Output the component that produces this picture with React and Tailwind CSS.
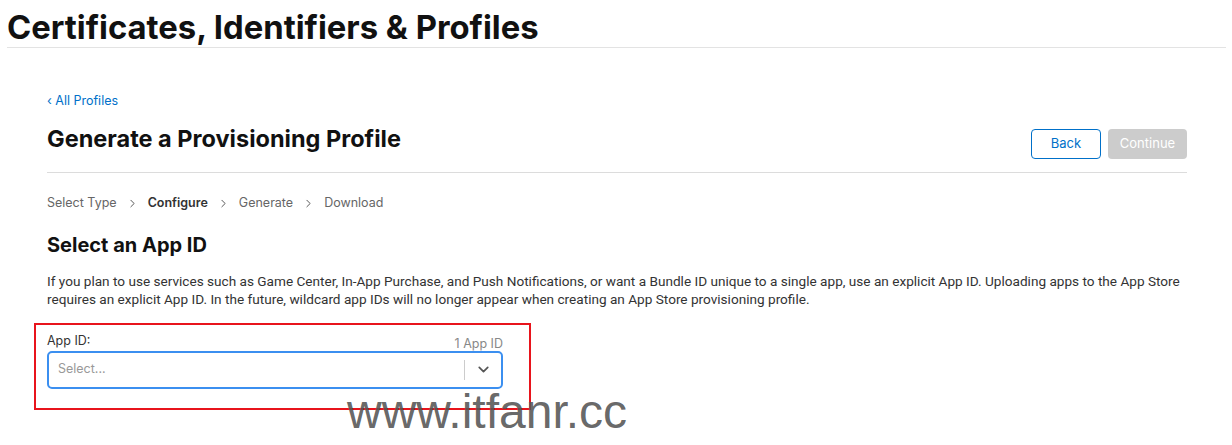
import { ChevronDown, ChevronRight } from "lucide-react";

const steps = [
    { label: "Select Type", active: false },
    { label: "Configure", active: true },
    { label: "Generate", active: false },
    { label: "Download", active: false },
];

const App = () => {
    return (
        <div className="relative w-[1232px] h-[445px] bg-white overflow-hidden text-[#333] font-['Inter',sans-serif]">
            <header className="pl-[7px] pr-[6px]">
                <h1 className="text-[32.8px] font-bold leading-none text-[#111] pt-[11px] pb-[3px]">
                    Certificates, Identifiers &amp; Profiles
                </h1>
                <hr className="border-t border-[#e3e3e3]" />
            </header>

            <main className="px-[47px] pr-[45px] pt-[45px]">
                <a className="text-[12.5px] text-[#0070c9] leading-4 block">‹ All Profiles</a>

                <div className="flex items-start justify-between mt-[16px] pb-[13px] border-b border-[#dcdcdc]">
                    <h2 className="text-[23.5px] leading-[28px] font-bold text-[#111]">Generate a Provisioning Profile</h2>
                    <div className="flex gap-[7px] mt-[4px]">
                        <button className="w-[70px] h-[30px] rounded-[4px] border border-[#0070c9] text-[13px] text-[#0070c9]">
                            Back
                        </button>
                        <button className="w-[79px] h-[30px] rounded-[4px] bg-[#cccccc] text-[13px] text-white">
                            Continue
                        </button>
                    </div>
                </div>

                <nav className="flex items-center mt-[21px] text-[12.5px] text-[#666]">
                    {steps.map((s, i) => (
                        <div key={s.label} className="flex items-center">
                            {i > 0 && <ChevronRight size={13} strokeWidth={1.8} className="mx-[9px] text-[#555]" />}
                            <span className={s.active ? "font-semibold text-[#333]" : ""}>{s.label}</span>
                        </div>
                    ))}
                </nav>

                <h3 className="mt-[20px] text-[20px] font-bold text-[#111] leading-6">Select an App ID</h3>

                <p className="mt-[15px] text-[13.6px] leading-[18px] text-[#333] font-['Roboto',sans-serif]">
                    If you plan to use services such as Game Center, In-App Purchase, and Push Notifications, or want a Bundle ID unique to a single app, use an explicit App ID. Uploading apps to the App Store requires an explicit App ID. In the future, wildcard app IDs will no longer appear when creating an App Store provisioning profile.
                </p>

                <div className="mt-[15px] -ml-[13px] w-[497px] border-2 border-[#e8141c] pt-[8px] pb-[19px] pl-[11px] pr-[26px]">
                    <div className="flex items-end justify-between text-[12.5px] leading-4">
                        <span className="text-[#333]">App ID:</span>
                        <span className="text-[#888] mb-[-3px]">1 App ID</span>
                    </div>
                    <div className="mt-[2px] h-[38px] rounded-[5px] border-2 border-[#3b8ff0] flex items-center">
                        <span className="flex-1 pl-[9px] text-[12.5px] text-[#999]">Select...</span>
                        <span className="w-px h-[20px] bg-[#ccc]" />
                        <span className="w-[36px] flex justify-center">
                            <ChevronDown size={17} strokeWidth={2.4} className="text-[#555]" />
                        </span>
                    </div>
                </div>
            </main>

            <div className="absolute left-[347px] top-[388px] text-[48px] leading-none text-[#555]/90 font-['Liberation_Sans',sans-serif]">
                www.itfanr.cc
            </div>
        </div>
    );
};

export default App;
